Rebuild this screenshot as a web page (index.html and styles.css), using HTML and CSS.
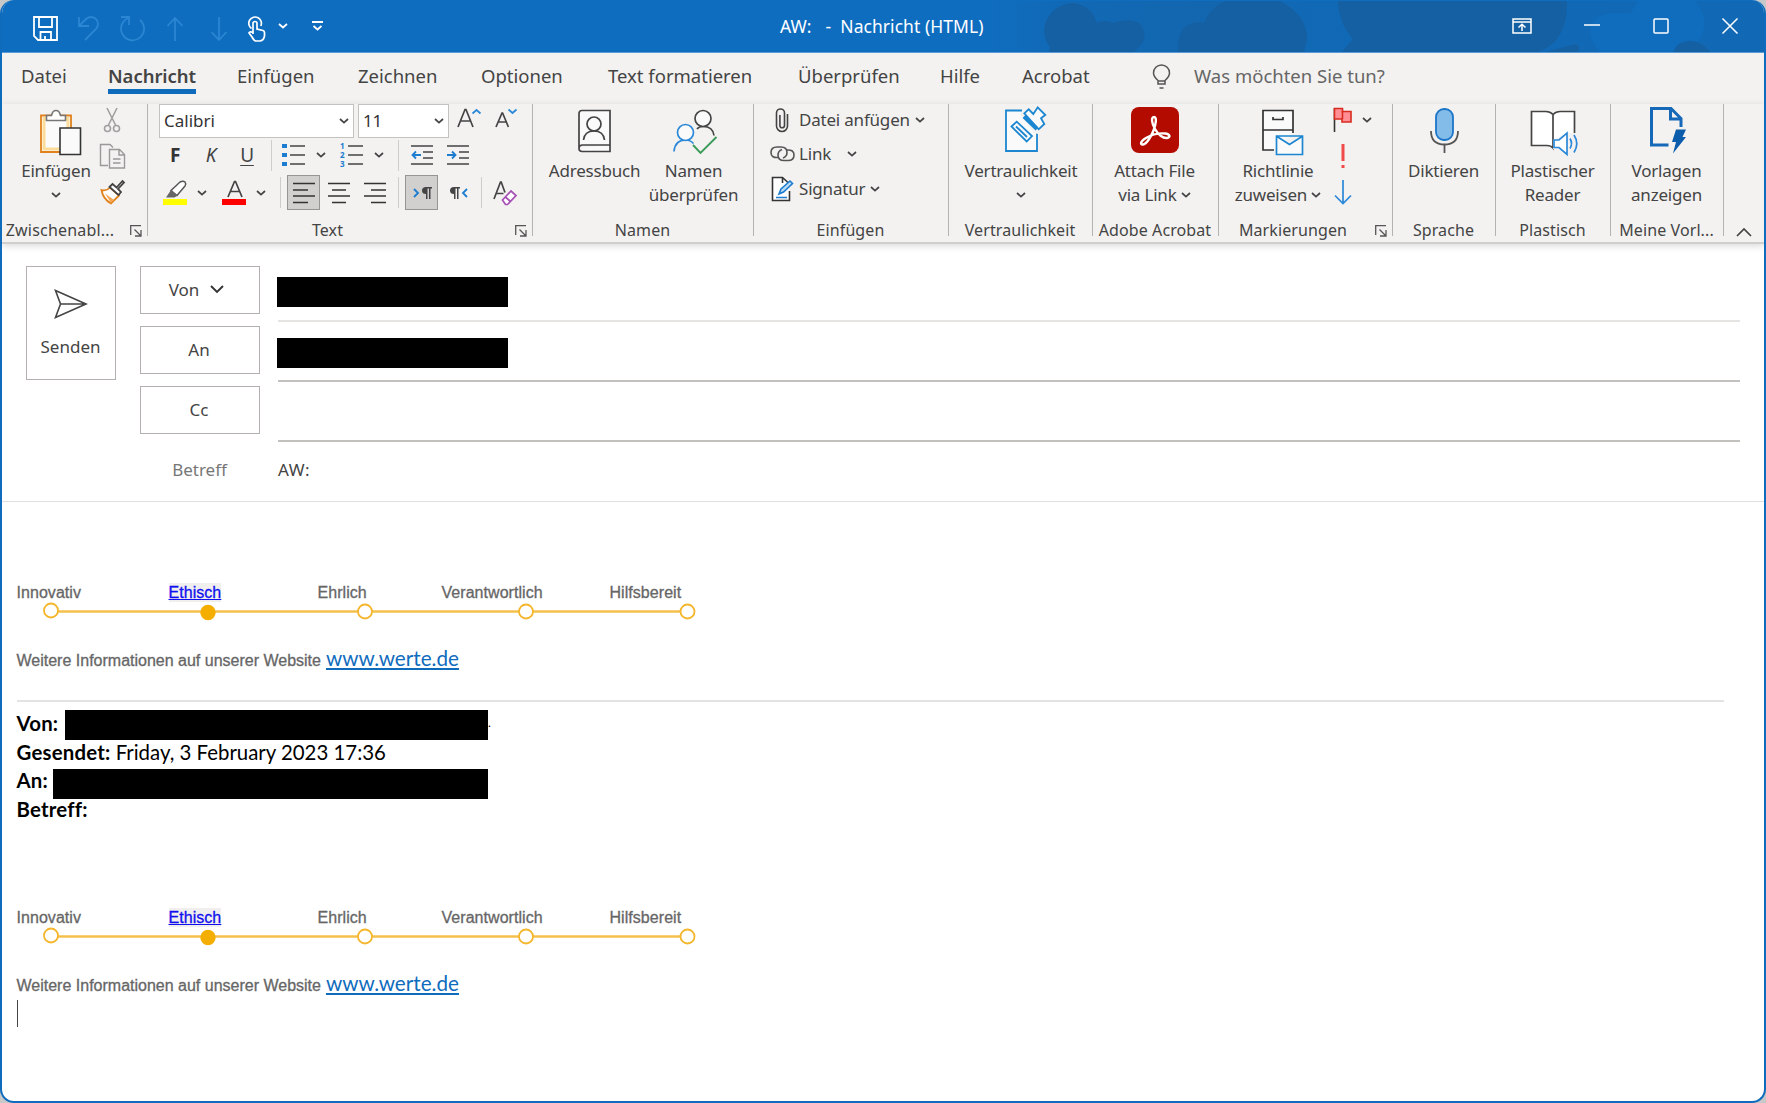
FILE: index.html
```html
<!DOCTYPE html>
<html lang="de">
<head>
    <meta charset="UTF-8">
    <meta name="viewport" content="width=device-width, initial-scale=1.0">
    <title>AW: - Nachricht (HTML)</title>
    <link rel="stylesheet" href="styles.css">
</head>
<body>

<!-- Wiederverwendete Symbole -->
<svg class="defs" width="0" height="0">
    <symbol id="chev" viewBox="0 0 10 6"><path d="M1 1l4 3.6L9 1" fill="none" stroke="#444" stroke-width="1.7"/></symbol>
    <symbol id="launcher" viewBox="0 0 12 12"><path d="M.7 10V.7H11M4.5 4.5l6 6M11 5v6H5" fill="none" stroke="#555" stroke-width="1.3"/></symbol>
</svg>

<div class="window">
    <div class="titlebar">
        <svg class="pattern" width="780" height="52" viewBox="986 0 780 52">
            <defs>
                <linearGradient id="fade"><stop offset="0" stop-color="#1464a9" stop-opacity="0"/><stop offset=".12" stop-color="#1464a9" stop-opacity=".5"/><stop offset=".3" stop-color="#1464a9" stop-opacity=".75"/><stop offset=".42" stop-color="#1464a9" stop-opacity=".4"/><stop offset="1" stop-color="#1464a9" stop-opacity=".45"/></linearGradient>
            </defs>
            <rect x="986" y="1" width="780" height="51" fill="url(#fade)"/>
            <g fill="#1560a2">
                <path d="M1049 52L1050 47Q1042 38 1045 24Q1052 4 1074 3Q1092 6 1097 23Q1104 19 1113 23Q1130 17 1140 24Q1148 34 1142 44L1134 52z"/>
                <path d="M1178 52Q1177 36 1184 28Q1192 21 1204 23Q1210 8 1225 1H1280Q1308 16 1307 40L1304 52z"/>
                <path d="M1338 1H1567Q1568 42 1538 52H1342L1353 39Q1338 22 1338 1z"/>
                <path d="M1545 52L1576 44Q1582 48 1577 52z"/>
                <path d="M1673 52Q1678 41 1690 40Q1703 42 1710 52z"/>
            </g>
            <path d="M1638 1H1694Q1706 12 1704 28Q1702 36 1698 42Q1678 38 1673 52H1600Q1584 34 1594 20Q1606 10 1630 14z" fill="#0f6ebf" opacity=".7"/>
        </svg>
        <div class="quick">
            <svg width="26" height="26" viewBox="0 0 26 26" fill="none" stroke="#fff" stroke-width="1.8"><path d="M1 1h23v23H5l-4-4zM6 1v10h13V1M7.5 24v-8H18v8M12 20v4"/></svg>
            <svg width="22" height="26" viewBox="0 0 22 26" fill="none" stroke="#2b86d3" stroke-width="1.8"><path d="M1 1v9h10M1.5 9.5L8 3q5-4 10 0 4 5 0 10L7 24"/></svg>
            <svg width="26" height="26" viewBox="0 0 26 26" fill="none" stroke="#2b86d3" stroke-width="1.8"><path d="M1 1h8v8M8.5 2A11.5 11.5 0 1 0 20 4"/></svg>
            <svg width="18" height="26" viewBox="0 0 18 26" fill="none" stroke="#2b86d3" stroke-width="1.8"><path d="M9 25V2M1.5 10L9 2l7.5 8"/></svg>
            <svg width="18" height="26" viewBox="0 0 18 26" fill="none" stroke="#2b86d3" stroke-width="1.8"><path d="M9 1v23M1.5 16L9 24l7.5-8"/></svg>
            <svg width="19" height="26" viewBox="0 0 19 26" fill="none" stroke="#fff" stroke-width="1.7"><path d="M4.5 12.5A6.3 6.3 0 1 1 13.800 10M6 16V7.5a2 2 0 0 1 4 0V13l6 1.5q1.500.5 1.500 2V20q-1 5-5 5H9.500Q7 25 5 21l-3-4q1-2 4-.5V18"/></svg>
            <svg width="10" height="6" viewBox="0 0 10 6"><path d="M1 1l4 3.5L9 1" fill="none" stroke="#fff" stroke-width="1.8"/></svg>
            <svg width="11" height="11" viewBox="0 0 11 11"><path d="M0 1h11M1.500 5l4 3.500 4-3.500" fill="none" stroke="#fff" stroke-width="1.8"/></svg>
        </div>
        <div class="title">AW: &nbsp; - &nbsp;Nachricht (HTML)</div>
        <div class="controls">
            <svg width="20" height="16" viewBox="0 0 20 16" fill="none" stroke="#fff" stroke-width="1.5"><path d="M1 1h18v14H1zM1 4h18M10 13V6.500M6.500 9.500L10 6.200l3.500 3.300"/></svg>
            <svg width="16" height="16" viewBox="0 0 16 16"><path d="M0 7h16" stroke="#fff" stroke-width="1.5"/></svg>
            <svg width="16" height="16" viewBox="0 0 16 16"><rect x="1" y="1" width="14" height="14" rx="1" fill="none" stroke="#fff" stroke-width="1.5"/></svg>
            <svg width="16" height="16" viewBox="0 0 16 16"><path d="M.5.5l15 15M15.500.5l-15 15" stroke="#fff" stroke-width="1.5"/></svg>
        </div>
    </div>

    <div class="tabs">
        <span>Datei</span>
        <span class="active">Nachricht</span>
        <span>Einfügen</span>
        <span>Zeichnen</span>
        <span>Optionen</span>
        <span>Text formatieren</span>
        <span>Überprüfen</span>
        <span>Hilfe</span>
        <span>Acrobat</span>
        <svg width="20" height="26" viewBox="0 0 20 26" fill="none" stroke="#555" stroke-width="1.5"><path d="M6 20v-3.500Q1.500 12.500 1.500 9a8 8 0 0 1 16 0q0 3.500-4.500 7.500V20zM6 17h7M7.500 24h4"/></svg>
        <span class="search">Was möchten Sie tun?</span>
    </div>

    <div class="ribbon">
        <div class="group clipboard">
            <div class="tools">
                <div class="big">
                    <svg width="48" height="48" viewBox="0 0 48 48" fill="none"><path d="M9 8.500h30V45H9z" fill="#fff" stroke="#e0811c" stroke-width="1.8"/><path d="M12 11.500h24V42H12z" fill="#fbfbfb" stroke="#fbdc9a" stroke-width="3"/><path d="M14.500 13.500V8.500h5q1-5 4.500-5t4.500 5h5v5z" fill="#fff" stroke="#777" stroke-width="1.6"/><path d="M28 21h20.500v26.500H28z" fill="#fafafa" stroke="#333" stroke-width="1.6"/></svg>
                    <span>Einfügen</span>
                    <svg class="chev" width="10" height="6"><use href="#chev"/></svg>
                </div>
                <div class="small-col">
                    <svg width="26" height="26" viewBox="0 0 26 26" fill="none" stroke="#a0a0a0" stroke-width="1.6"><path d="M8 1l8.500 17M18 1L9.500 18"/><circle cx="8.500" cy="21.500" r="3"/><circle cx="17.500" cy="21.500" r="3"/></svg>
                    <svg width="26" height="26" viewBox="0 0 26 26" fill="none" stroke="#999" stroke-width="1.4"><path d="M9 22.500H1.500V1.500H11l3 3M10.500 6.500h10l5 5V25h-15zM20 6.500V12h5.500M14 16h7.500M14 20h7.500"/></svg>
                    <svg width="26" height="26" viewBox="0 0 26 26" fill="none" stroke-width="1.8"><path d="M2.500 11q5 1.500 8.500-2.500l9 8L12 24.500Q4 20 2.500 11z" stroke="#e0811c" fill="#fff"/><path d="M6 14.500l9 6.500-3 3z" fill="#f6a64f"/><path d="M10.500 8l3-3 4 3.500 6-6.500 1.500 1.500-6 6.500 3 3-2.500 3z" stroke="#444" fill="#fff"/></svg>
                </div>
            </div>
            <div class="label"><span>Zwischenabl...</span><i><svg width="12" height="12"><use href="#launcher"/></svg></i></div>
        </div>

        <div class="group text">
            <div class="tools rows">
                <div class="row fonts">
                    <div class="combo family"><span>Calibri</span><svg width="10" height="6"><use href="#chev"/></svg></div>
                    <div class="combo size"><span>11</span><svg width="10" height="6"><use href="#chev"/></svg></div>
                    <svg width="24" height="20" viewBox="0 0 24 20" fill="none" stroke="#444" stroke-width="1.7"><path d="M1 19L8 1.500h1L16 19M3.500 13h10"/><path d="M15.500 5.500L19.500 2l4 3.500" stroke="#2b88d8"/></svg>
                    <svg width="22" height="20" viewBox="0 0 22 20" fill="none" stroke="#444" stroke-width="1.7"><path d="M1 19L7 5h.6l5.800 14M3 14h8.500"/><path d="M13.500 1.500l4 3.500 4-3.500" stroke="#2b88d8"/></svg>
                </div>
                <div class="row format">
                    <b class="letter">F</b><i class="letter">K</i><span class="letter underline">U</span>
                    <span class="sep"></span>
                    <svg width="24" height="24" viewBox="0 0 24 24"><path d="M0 1h5v4H0zM0 10h5v4H0zM0 19h5v4H0z" fill="#1c7cd0"/><path d="M8 3h15M8 12h15M8 21h15" stroke="#444" stroke-width="1.6"/></svg>
                    <svg width="10" height="6"><use href="#chev"/></svg>
                    <svg width="24" height="24" viewBox="0 0 24 24"><text class="nums" x="0" y="6">1</text><text class="nums" x="0" y="15">2</text><text class="nums" x="0" y="24">3</text><path d="M8 3h15M8 12h15M8 21h15" stroke="#444" stroke-width="1.6"/></svg>
                    <svg width="10" height="6"><use href="#chev"/></svg>
                    <span class="sep"></span>
                    <svg width="22" height="24" viewBox="0 0 22 24" fill="none" stroke="#444" stroke-width="1.6"><path d="M0 3h22M12 9h10M12 15h10M0 21h22"/><path d="M10 12H1.500M5 8.500L1.500 12 5 15.500" stroke="#1c7cd0" stroke-width="1.8"/></svg>
                    <svg width="22" height="24" viewBox="0 0 22 24" fill="none" stroke="#444" stroke-width="1.6"><path d="M0 3h22M12 9h10M12 15h10M0 21h22"/><path d="M0 12h8.500M5 8.500L8.500 12 5 15.500" stroke="#1c7cd0" stroke-width="1.8"/></svg>
                </div>
                <div class="row para">
                    <svg width="26" height="26" viewBox="0 0 26 26"><path d="M8 10.500l9-8.500q3-1.500 5 0 1.500 2 0 4l-8 9.500z" fill="#fff" stroke="#555" stroke-width="1.5"/><path d="M8 10l6.500 5.500-3 2H3z" fill="#666"/><path d="M0 19h24v6H0z" fill="#ff0"/></svg>
                    <svg width="10" height="6"><use href="#chev"/></svg>
                    <svg width="26" height="26" viewBox="0 0 26 26"><path d="M6 17L12.500 1.500h1L20 17M8.500 11.500h9" fill="none" stroke="#444" stroke-width="1.7"/><path d="M0 19h24v6H0z" fill="#f00"/></svg>
                    <svg width="10" height="6"><use href="#chev"/></svg>
                    <span class="sep"></span>
                    <span class="toggle on"><svg width="22" height="22" viewBox="0 0 22 22"><path d="M0 1.500h22M0 8h15M0 14h22M0 20.500h15" stroke="#333" stroke-width="1.5"/></svg></span>
                    <span class="toggle"><svg width="22" height="22" viewBox="0 0 22 22"><path d="M0 1.500h22M4 8h14M0 14h22M4 20.500h14" stroke="#333" stroke-width="1.5"/></svg></span>
                    <span class="toggle"><svg width="22" height="22" viewBox="0 0 22 22"><path d="M0 1.500h22M7 8h15M0 14h22M7 20.500h15" stroke="#333" stroke-width="1.5"/></svg></span>
                    <span class="sep"></span>
                    <span class="toggle on"><svg width="20" height="14" viewBox="0 0 20 14"><path d="M2 3l4 4-4 4" fill="none" stroke="#1c7cd0" stroke-width="1.8"/><path d="M14 1h6v1.500h-1.500V13H17V2.500h-1.500V13H14V8q-4 0-4-3.500T14 1z" fill="#444"/></svg></span>
                    <span class="toggle"><svg width="20" height="14" viewBox="0 0 20 14"><path d="M18 3l-4 4 4 4" fill="none" stroke="#1c7cd0" stroke-width="1.8"/><path d="M5 1h6v1.500H9.500V13H8V2.500H6.500V13H5V8Q1 8 1 4.500T5 1z" fill="#444"/></svg></span>
                    <span class="sep"></span>
                    <svg width="24" height="26" viewBox="0 0 24 26" fill="none" stroke="#444" stroke-width="1.7"><path d="M1 19L7.500 2h.7L12 12.500M3.500 13.500h7"/><path d="M9.500 20l8.500-9 5 4.500-8.500 9h-2zM12.500 17l5 4.500" stroke="#a64fb5" fill="#fff"/></svg>
                </div>
            </div>
            <div class="label"><span>Text</span><i><svg width="12" height="12"><use href="#launcher"/></svg></i></div>
        </div>

        <div class="group names">
            <div class="tools">
                <div class="big">
                    <svg width="48" height="48" viewBox="0 0 48 48" fill="#fafafa" stroke="#444" stroke-width="1.7"><path d="M11 3.500h28v41H11q-3 0-3-3v-35q0-3 3-3zM39 38H11q-3 .5-3 3"/><circle cx="23" cy="17" r="7"/><path d="M12.500 33q1-9 10.500-9t10.500 9" fill="none"/></svg>
                    <span>Adressbuch</span>
                </div>
                <div class="big">
                    <svg width="48" height="48" viewBox="0 0 48 48" fill="#fafafa" stroke="#444" stroke-width="1.7"><path d="M27 22q2-2.500 6-2.500 10 0 11 9" fill="none"/><circle cx="33" cy="11.500" r="8"/><path d="M4 44.500q1-11.500 11.500-11.500 5 0 8 3.500" fill="none" stroke="#2b88d8"/><circle cx="15.500" cy="25.500" r="8" stroke="#2b88d8"/><path d="M23 38l7.500 8 16-16" fill="none" stroke="#3a9b58" stroke-width="1.9"/></svg>
                    <span>Namen<br>überprüfen</span>
                </div>
            </div>
            <div class="label"><span>Namen</span></div>
        </div>

        <div class="group insert">
            <div class="tools list">
                <div class="item"><svg width="26" height="26" viewBox="0 0 26 26" fill="none" stroke="#444" stroke-width="1.6"><path d="M18.500 7v12a5.500 5.500 0 0 1-11 0V6a4 4 0 0 1 8 0v12.500a2.300 2.300 0 0 1-4.600 0V8"/></svg><span>Datei anfügen</span><svg width="10" height="6"><use href="#chev"/></svg></div>
                <div class="item link"><svg width="26" height="26" viewBox="0 0 26 26" fill="none" stroke="#555" stroke-width="1.6"><path d="M9 16.500Q2 17 2 11.500T8 6h4q6 0 6 5.500 0 4-4 5.500"/><path d="M18 9q7-.5 7 5t-6 5.500h-4q-6 0-6-5.500 0-4 4-5.500"/></svg><span>Link</span><svg width="10" height="6"><use href="#chev"/></svg></div>
                <div class="item"><svg width="26" height="26" viewBox="0 0 26 26" fill="none"><path d="M20.500 15v9.500h-17v-23h10l6 5.500M13.500 1.500V7" fill="#fff" stroke="#333" stroke-width="1.6"/><path d="M10 18l2-5 9-8 2.500 2.500-9 8.500zM7 21.500h11" fill="#bcdcf5" stroke="#1c7cd0" stroke-width="1.6"/></svg><span>Signatur</span><svg width="10" height="6"><use href="#chev"/></svg></div>
            </div>
            <div class="label"><span>Einfügen</span></div>
        </div>

        <div class="group sensitivity">
            <div class="tools">
                <div class="big">
                    <svg width="48" height="48" viewBox="0 0 48 48" fill="#fafafa" stroke="#1c86d1" stroke-width="1.8"><path d="M25 3.500H9V44h31V20"/><path d="M23 7l5-6h20l-2 18-5 8-4-1z" fill="#f3f2f1" stroke="none"/><path d="M14.500 19.500l5.200-4.800L35 29l-5.300 5.500zM19 19.500l11 10.500"/><path d="M27.300 6.300l4.400-4 4.600 4.700 4.400-6.700 7.600 7.700-4.300 3.300 3.300 5.700-5.600 5.300z"/><path d="M27 9.500l13 12.500" stroke-width="4"/></svg>
                    <span>Vertraulichkeit</span>
                    <svg class="chev" width="10" height="6"><use href="#chev"/></svg>
                </div>
            </div>
            <div class="label"><span>Vertraulichkeit</span></div>
        </div>

        <div class="group acrobat">
            <div class="tools">
                <div class="big">
                    <svg width="48" height="48" viewBox="0 0 48 48"><rect width="48" height="46" rx="8" fill="#b30b00"/><path d="M23 10c-3 0-2.500 6 1 12 3 5.500 8 9.500 12 9s3-4-2-4.500c-6-.5-14 1.500-19 4.500-6 3.500-6 7-3 6.500 3.500-.5 8-7.500 10.500-14S26 10 23 10z" fill="none" stroke="#fff" stroke-width="2.4"/></svg>
                    <span>Attach File<br>via Link <svg width="10" height="6"><use href="#chev"/></svg></span>
                </div>
            </div>
            <div class="label"><span>Adobe Acrobat</span></div>
        </div>

        <div class="group marks">
            <div class="tools">
                <div class="big">
                    <svg width="48" height="48" viewBox="0 0 48 48" fill="#fafafa" stroke="#333" stroke-width="1.7"><path d="M20 43H9V3.500h30V26M9 23h30M19 10v2.500h10V10"/><path d="M22.500 29h26v18.500h-26zM23 29.500l12.500 8 12.500-8" stroke="#1c86d1"/></svg>
                    <span>Richtlinie<br>zuweisen <svg width="10" height="6"><use href="#chev"/></svg></span>
                </div>
                <div class="flags">
                    <div><svg width="20" height="26" viewBox="0 0 20 26"><path d="M1.500 1v24" stroke="#333" stroke-width="1.6"/><path d="M1.500 1.500h8v3h8.500V15H9v-3H1.500z" fill="#ff8f94" stroke="#d92b1f" stroke-width="1.6"/><path d="M9.500 4v8" stroke="#d92b1f" stroke-width="1.6"/></svg><svg width="10" height="6"><use href="#chev"/></svg></div>
                    <svg width="20" height="26" viewBox="0 0 20 26"><path d="M8.500 1h3v17h-3zM8.500 22h3v3h-3z" fill="#f04a4a"/></svg>
                    <svg width="20" height="26" viewBox="0 0 20 26"><path d="M10 1v23M2 16.500l8 8 8-8" fill="none" stroke="#2b88d8" stroke-width="1.7"/></svg>
                </div>
            </div>
            <div class="label"><span>Markierungen</span><i><svg width="12" height="12"><use href="#launcher"/></svg></i></div>
        </div>

        <div class="group speech">
            <div class="tools">
                <div class="big">
                    <svg width="48" height="48" viewBox="0 0 48 48" fill="none"><rect x="16" y="2" width="17" height="31" rx="8" fill="#83bbe9" stroke="#1c76c8" stroke-width="1.8"/><path d="M11 24q0 13.500 13.500 13.500T38 24M24.500 37.500V46" stroke="#555" stroke-width="1.8"/></svg>
                    <span>Diktieren</span>
                </div>
            </div>
            <div class="label"><span>Sprache</span></div>
        </div>

        <div class="group reader">
            <div class="tools">
                <div class="big">
                    <svg width="48" height="48" viewBox="0 0 48 48" fill="#fff" stroke="#444" stroke-width="1.7"><path d="M24 7.500Q21 4.500 17 4.500H2.500v34H18q4 0 6 2.500zM24 7.500q3-3 7-3h14.500v34H24z"/><path d="M38 26h11v21H36l-12-5v-9z" fill="#f3f2f1" stroke="none"/><path d="M25 33h5l8-7v21.500l-8-7h-5z" stroke="#2b88d8"/><path d="M41 31.500q3 5 0 10M45 28q5.500 8.500 0 17.500" fill="none" stroke="#2b88d8"/></svg>
                    <span>Plastischer<br>Reader</span>
                </div>
            </div>
            <div class="label"><span>Plastisch</span></div>
        </div>

        <div class="group templates">
            <div class="tools">
                <div class="big">
                    <svg width="48" height="48" viewBox="0 0 48 48"><path d="M25.500 38H8.500V1.500H28l10 10V20M27.500 1.500V12H38" fill="none" stroke="#1569b8" stroke-width="3"/><path d="M33 22.500h10L39.500 30H43L30 46.500l3-11.500h-4z" fill="#0b5cab"/></svg>
                    <span>Vorlagen<br>anzeigen</span>
                </div>
            </div>
            <div class="label"><span>Meine Vorl...</span></div>
        </div>

        <svg class="collapse" width="16" height="10" viewBox="0 0 16 10"><path d="M1 9l7-7 7 7" fill="none" stroke="#444" stroke-width="1.7"/></svg>
    </div>

    <div class="compose">
        <div class="send">
            <svg width="34" height="30" viewBox="0 0 34 30" fill="none" stroke="#444" stroke-width="1.6"><path d="M1.500 1.500L32 15 1.500 28.500l5-13.500zM6.500 15H32"/></svg>
            <span>Senden</span>
        </div>
        <div class="fields">
            <div class="field from"><div class="btn">Von <svg width="14" height="9" viewBox="0 0 14 9"><path d="M1 1l6 6 6-6" fill="none" stroke="#333" stroke-width="1.9"/></svg></div><div class="value"><span class="redacted"></span></div></div>
            <div class="field"><div class="btn">An</div><div class="value"><span class="redacted"></span></div></div>
            <div class="field"><div class="btn">Cc</div><div class="value"></div></div>
            <div class="field subject"><div class="caption">Betreff</div><div class="value">AW:</div></div>
        </div>
    </div>

    <div class="message">
        <div class="values">
            <span>Innovativ</span><a href="#">Ethisch</a><span>Ehrlich</span><span>Verantwortlich</span><span>Hilfsbereit</span>
        </div>
        <svg class="track" width="690" height="20" viewBox="0 0 690 20"><path d="M34 10.500h637" stroke="#f4c04c" stroke-width="2.5"/><g fill="#fff" stroke="#f4b62c" stroke-width="1.8"><circle cx="34" cy="9.500" r="7"/><circle cx="348" cy="10.500" r="7"/><circle cx="509" cy="10.500" r="7"/><circle cx="670.500" cy="10.500" r="7"/></g><circle cx="191" cy="11.500" r="7.700" fill="#f4ae00"/></svg>
        <p class="info"><span>Weitere Informationen auf unserer Website</span><a href="#">www.werte.de</a></p>

        <div class="quoted">
            <p><b>Von:</b><span class="redacted mail-from"></span><span class="rest">.</span></p>
            <p><b>Gesendet:</b>&nbsp;Friday, 3 February 2023 17:36</p>
            <p><b>An:</b><span class="redacted mail-to"></span></p>
            <p><b>Betreff:</b></p>
        </div>

        <div class="values">
            <span>Innovativ</span><a href="#">Ethisch</a><span>Ehrlich</span><span>Verantwortlich</span><span>Hilfsbereit</span>
        </div>
        <svg class="track" width="690" height="20" viewBox="0 0 690 20"><path d="M34 10.500h637" stroke="#f4c04c" stroke-width="2.5"/><g fill="#fff" stroke="#f4b62c" stroke-width="1.8"><circle cx="34" cy="9.500" r="7"/><circle cx="348" cy="10.500" r="7"/><circle cx="509" cy="10.500" r="7"/><circle cx="670.500" cy="10.500" r="7"/></g><circle cx="191" cy="11.500" r="7.700" fill="#f4ae00"/></svg>
        <p class="info last"><span>Weitere Informationen auf unserer Website</span><a href="#">www.werte.de</a></p>
        <div class="caret"></div>
    </div>
</div>

</body>
</html>
```
FILE: styles.css
```css
* {
    box-sizing: border-box;
}

body {
    margin: 0;
    background-color: #c8c8c8;
    font-family: 'Noto Sans', sans-serif;
    color: #444;
}

svg {
    display: block;
    overflow: visible;
}

p {
    margin: 0;
}

.defs {
    position: absolute;
}

.window {
    height: 1103px;
    border: 2px solid #0f6cbd;
    border-top: none;
    border-radius: 14px;
    overflow: hidden;
    background-color: #fff;
}

/* Titelleiste */
.titlebar {
    position: relative;
    height: 53px;
    background-color: #0f6dbf;
    border-bottom: 1px solid #5a9ad4;
    display: grid;
    grid-template-columns: 776px 1fr auto;
    color: #fff;
}

.pattern {
    position: absolute;
    right: -2px;
    top: 0;
}

.quick,
.title,
.controls {
    position: relative;
}

.quick {
    display: grid;
    grid-template-columns: 45px 42px 46px 44px 37px 31px 34px 12px;
    align-items: center;
    padding: 4px 0 0 31px;
}

.quick svg:nth-child(n+7) {
    margin-top: -5px;
}

.title {
    font-size: 17.5px;
    line-height: 53px;
    letter-spacing: 0.05px;
    padding-left: 2px;
    white-space: pre;
}

.controls {
    display: flex;
    align-items: flex-start;
    gap: 53px;
    padding: 18px 26px 0 0;
}

.controls svg:first-child {
    margin-right: -1px;
}

/* Registerkarten */
.tabs {
    display: grid;
    grid-template-columns: 87px 129px 121px 123px 127px 190px 142px 82px 130px 42px 1fr;
    height: 51px;
    padding-left: 19px;
    background-color: #f3f2f1;
    font-size: 18.5px;
    letter-spacing: 0;
    line-height: 45px;
    white-space: nowrap;
}

.tabs svg {
    margin-top: 11px;
}

.tabs .active {
    justify-self: start;
    height: 41px;
    border-bottom: 5px solid #0f6cbd;
    font-weight: 600;
    letter-spacing: -0.05px;
}

.tabs .search {
    color: #666;
}

/* Menüband */
.ribbon {
    display: flex;
    height: 140px;
    background-color: #f3f2f1;
    border-bottom: 2px solid #d0cfce;
    box-shadow: 0 2px 7px rgba(0, 0, 0, 0.15);
    font-size: 17px;
    letter-spacing: -0.2px;
    white-space: nowrap;
    position: relative;
}

.group {
    display: flex;
    flex-direction: column;
    background: linear-gradient(#b5b3b1, #b5b3b1) right top / 1.5px 132px no-repeat;
}

.clipboard { width: 146px; }
.text { width: 385px; }
.names { width: 221px; }
.insert { width: 195px; }
.sensitivity { width: 144px; }
.acrobat { width: 126px; }
.marks { width: 174px; }
.speech { width: 103px; }
.reader { width: 115px; }
.templates { width: 113px; }

.tools {
    display: flex;
    justify-content: center;
    height: 116px;
}

.label {
    display: flex;
    height: 20px;
    margin-right: 2px;
    line-height: 20px;
    font-size: 16px;
    letter-spacing: 0.1px;
}

.label span {
    flex: 1;
    text-align: center;
}

.label i {
    width: 24px;
    padding: 5px 0 0 8px;
}

.clipboard .label span {
    letter-spacing: 0.2px;
    margin-left: -4px;
}

.big {
    display: flex;
    flex-direction: column;
    align-items: center;
    padding-top: 3px;
    line-height: 24px;
    text-align: center;
}

.big > span {
    margin-top: 4px;
}

.big span svg {
    display: inline-block;
    vertical-align: 3px;
}

.big .chev {
    margin-top: 9px;
}

.clipboard .tools {
    justify-content: flex-start;
    padding-left: 11px;
}

.clipboard .big {
    width: 86px;
}

.small-col {
    display: flex;
    flex-direction: column;
    gap: 10px;
    padding-top: 3px;
}

.names .tools {
    justify-content: flex-start;
    padding-left: 14px;
}

.names .big:first-child {
    width: 95px;
}

.names .big:last-child {
    width: 103px;
}

.acrobat .tools {
    padding-right: 3px;
}

.speech .tools,
.reader .tools,
.templates .tools {
    padding-right: 2px;
}

/* Gruppe Text */
.rows {
    flex-direction: column;
    justify-content: flex-start;
}

.row {
    display: grid;
    align-items: center;
}

.fonts {
    height: 34px;
    grid-template-columns: 199px 99px 38px 24px;
    padding-left: 11px;
}

.combo {
    display: flex;
    align-items: center;
    justify-content: space-between;
    height: 34px;
    padding: 0 4px 1px;
    background-color: #fff;
    border: 1px solid #c4c2c0;
    color: #333;
}

.family {
    width: 195px;
    letter-spacing: 0;
}

.size {
    width: 91px;
}

.fonts > svg {
    margin-top: -6px;
}

.format {
    height: 34px;
    padding-left: 15px;
    grid-template-columns: 36px 36px 36px 11px 34px 24px 34px 24px 13px 36px 22px;
}

.letter {
    width: 24px;
    text-align: center;
    font-size: 19px;
    line-height: 24px;
}

b.letter {
    color: #333;
}

.underline {
    text-decoration: underline;
    text-underline-offset: 3px;
}

.nums {
    font-size: 8px;
    font-weight: 700;
    fill: #1c7cd0;
}

.sep {
    width: 1px;
    height: 31px;
    background-color: #cfcdcb;
}

.para {
    height: 41px;
    padding-left: 15px;
    grid-template-columns: 34px 25px 34px 24px 7px 35px 36px 40px 7px 37px 39px 12px 24px;
}

.toggle {
    display: flex;
    align-items: center;
    justify-content: center;
    width: 33px;
    height: 35px;
}

.toggle.on {
    background-color: #d2d0ce;
    border: 1px solid #979593;
}

/* Gruppe Einfügen */
.list {
    flex-direction: column;
    justify-content: flex-start;
    padding: 1px 0 0 15px;
}

.item {
    display: flex;
    align-items: center;
    height: 34.5px;
    line-height: 26px;
}

.item:first-child {
    height: 30px;
    margin-bottom: 2px;
}

.item span {
    margin: 0 5px 0 4px;
}

.link span {
    margin-right: 16px;
}

.marks .tools {
    justify-content: flex-start;
    padding-left: 14px;
}

.marks .big {
    width: 90px;
}

.flags {
    display: flex;
    flex-direction: column;
    gap: 10px;
    padding: 3px 0 0 10px;
}

.flags div {
    display: flex;
    align-items: center;
    gap: 9px;
}

.collapse {
    margin: 123px 0 0 12px;
}

/* Kopfzeilen der Nachricht */
.compose {
    display: flex;
    height: 258px;
    padding: 22px 24px 0;
    border-bottom: 1px solid #e1dfdd;
    font-size: 17px;
}

.send {
    display: flex;
    flex-direction: column;
    align-items: center;
    width: 90px;
    height: 114px;
    padding: 22px 1px 0 0;
    border: 1.5px solid #b3b0ad;
}

.send span {
    margin-top: 16px;
}

.fields {
    flex: 1;
    margin-left: 24px;
}

.field {
    display: flex;
    height: 60px;
}

.btn {
    display: flex;
    align-items: center;
    justify-content: center;
    gap: 11px;
    width: 120px;
    height: 48px;
    padding: 0 2px 2px 0;
    border: 1.5px solid #b3b0ad;
}

.from .btn {
    padding-right: 7px;
}

.caption {
    width: 120px;
    padding-right: 1px;
    line-height: 48px;
    text-align: center;
    color: #777;
}

.value {
    flex: 1;
    margin-left: 18px;
    height: 56px;
    border-bottom: 2px solid #c2c1be;
    line-height: 48px;
    letter-spacing: 0.5px;
}

.from .value {
    border-color: #e5e4e3;
}

.subject .value {
    border: none;
}

.redacted {
    display: block;
    width: 231px;
    height: 30px;
    background-color: #000;
}

.value .redacted {
    margin: 12px 0 0 -1px;
}

.from .redacted {
    margin-top: 11px;
}

/* Nachrichtentext */
.message {
    padding: 81px 40px 0 14.5px;
    color: #000;
}

.values {
    display: grid;
    grid-template-columns: 152px 149px 124px 168px auto;
    justify-content: start;
    height: 18px;
    font: 16px/19px 'Liberation Sans', sans-serif;
    letter-spacing: 0.05px;
    color: #666;
    -webkit-text-stroke: 0.3px;
}

.values a {
    justify-self: start;
    background-color: #f0efee;
    color: #1010ee;
}

.info {
    display: flex;
    align-items: baseline;
    margin-top: 24px;
    height: 55px;
    font: 20.7px/26px Lato, sans-serif;
}

.info span {
    width: 309.5px;
    font: 16px 'Liberation Sans', sans-serif;
    letter-spacing: 0;
    color: #666;
    -webkit-text-stroke: 0.3px;
}

.info a {
    color: #0f6cbd;
}

.quoted {
    height: 208px;
    padding-top: 8px;
    border-top: 2px solid #e3e3e3;
    font: 20.4px/26px Lato, sans-serif;
}

.quoted p {
    display: flex;
    height: 28.6px;
}

.quoted p:nth-child(odd) {
    width: 471.5px;
}

.quoted b {
    letter-spacing: 0.2px;
}

.mail-from {
    width: 423px;
    margin-left: auto;
}

.mail-to {
    width: 435px;
    margin: 2px 0 0 auto;
}

.rest {
    width: 0;
    font-size: 12px;
}

.last {
    height: 30px;
}

.caret {
    width: 1.5px;
    height: 27px;
    background-color: #444;
}
```
